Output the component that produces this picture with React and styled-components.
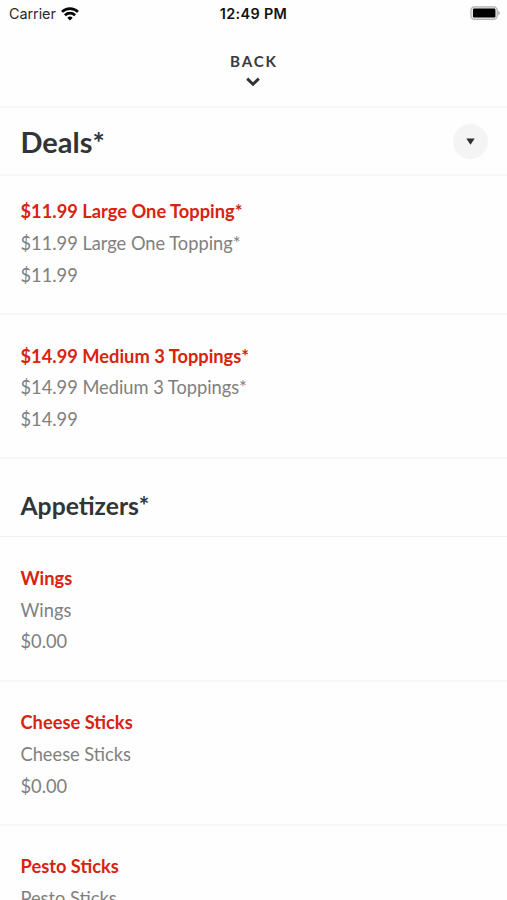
import styled, { createGlobalStyle } from "styled-components";

const GlobalStyle = createGlobalStyle`
    * {
        box-sizing: border-box;
        margin: 0;
        padding: 0;
    }

    body {
        background-color: #fefefe;
        font-family: Lato, "Liberation Sans", sans-serif;
        overflow: hidden;
    }
`

const Screen = styled.main`
    height: 900px;
    overflow: hidden;
    background-color: #fefefe;
`

const StatusBar = styled.header`
    display: grid;
    grid-template-columns: 1fr auto 1fr;
    align-items: center;
    height: 27px;
    padding: 0 9px;
    color: #111;
    font-family: Inter, Roboto, sans-serif;
    font-size: 14.4px;
`

const Carrier = styled.div`
    display: flex;
    align-items: center;
    gap: 5px;
    color: #2b2b2b;
    letter-spacing: -0.05px;
`

const Time = styled.time`
    font-size: 14.4px;
    font-weight: 600;
    letter-spacing: 0.35px;
`

const BatterySlot = styled.div`
    display: flex;
    justify-content: flex-end;
    margin-right: -3px;
    padding-bottom: 1px;
`

const BackButton = styled.button`
    display: flex;
    flex-direction: column;
    align-items: center;
    gap: 6px;
    width: 100%;
    height: 80.5px;
    padding: 24px 1px 0 0;
    border: none;
    border-bottom: 2px solid #f6f6f6;
    background: none;
    color: #3a3a3a;
    font-family: inherit;
    font-size: 15.2px;
    font-weight: 700;
    line-height: 20px;
    letter-spacing: 1.8px;
`

const BackLabel = styled.span`
    margin-right: -1.8px;
`

const SectionHeader = styled.div`
    display: flex;
    justify-content: space-between;
    align-items: center;
    height: ${(props) => (props.$large ? 68.5 : 78)}px;
    padding: ${(props) => (props.$large ? "2px 19px 0 20.5px" : "16.6px 19px 0 20.5px")};
    border-bottom: ${(props) => (props.$large ? "2px solid #f7f7f7" : "1px solid #f0f0f0")};
`

const SectionTitle = styled.h2`
    color: #333436;
    font-size: ${(props) => (props.$large ? 29 : 24.7)}px;
    font-weight: 700;
    line-height: 36px;
`

const Toggle = styled.button`
    display: flex;
    justify-content: center;
    align-items: center;
    width: 35px;
    height: 35px;
    border: none;
    border-radius: 50%;
    background-color: #f4f4f4;
`

const Item = styled.article`
    height: ${(props) => (props.$first ? 139 : 144.3)}px;
    padding: ${(props) => (props.$first ? 20.4 : 25.6)}px 20.5px 0;
    border-bottom: 2px solid #f7f7f7;
    color: #808080;
    font-size: 18.25px;
    line-height: 31.7px;
`

const ItemName = styled.h3`
    color: #d8230f;
    font-size: 18.3px;
    font-weight: 700;
`

const sections = [
    {
        title: "Deals*",
        large: true,
        items: [
            { name: "$11.99 Large One Topping*", price: "$11.99" },
            { name: "$14.99 Medium 3 Toppings*", price: "$14.99" },
        ],
    },
    {
        title: "Appetizers*",
        items: [
            { name: "Wings", price: "$0.00" },
            { name: "Cheese Sticks", price: "$0.00" },
            { name: "Pesto Sticks", price: "$0.00" },
        ],
    },
]

const WifiIcon = () => (
    <svg width="18" height="14" viewBox="0 0 18 14" fill="none" stroke="#050505" strokeWidth="2.6">
        <path d="M1 4.9a11.5 11.5 0 0 1 16 0" />
        <path d="M3.9 8.2a7.3 7.3 0 0 1 10.2 0" />
        <path d="M9 13.4 6.3 10.7a3.9 3.9 0 0 1 5.4 0z" fill="#050505" stroke="none" />
    </svg>
)

const BatteryIcon = () => (
    <svg width="31" height="14" viewBox="0 0 31 14">
        <rect x="0.9" y="0.8" width="26.4" height="12.6" rx="3.6" fill="#e4e4e4" stroke="#b4b4b4" strokeWidth="1.2" />
        <rect x="3" y="2.6" width="22.4" height="9" rx="1.4" fill="#000" />
        <path d="M28.4 4.8q2.8 2.3 0 4.6z" fill="#999" />
    </svg>
)

const ChevronIcon = () => (
    <svg width="14" height="10" viewBox="0 0 14 10" fill="none" stroke="#333" strokeWidth="2.9">
        <path d="M1.2 1.6 7 7.2 12.8 1.6" />
    </svg>
)

const CaretIcon = () => (
    <svg width="9" height="7" viewBox="0 0 9 7">
        <path d="M0.3 0.5h8.4L4.5 6.8z" fill="#303030" />
    </svg>
)

const MenuSection = ({ section }) => (
    <section>
        <SectionHeader $large={section.large}>
            <SectionTitle $large={section.large}>{section.title}</SectionTitle>
            {section.large && (
                <Toggle aria-label="Choose section">
                    <CaretIcon />
                </Toggle>
            )}
        </SectionHeader>
        {section.items.map((item, index) => (
            <Item key={item.name} $first={section.large && index === 0}>
                <ItemName>{item.name}</ItemName>
                <p>{item.name}</p>
                <p>{item.price}</p>
            </Item>
        ))}
    </section>
)

export default function App() {
    return (
        <Screen>
            <GlobalStyle />
            <StatusBar>
                <Carrier>
                    Carrier
                    <WifiIcon />
                </Carrier>
                <Time>12:49 PM</Time>
                <BatterySlot>
                    <BatteryIcon />
                </BatterySlot>
            </StatusBar>
            <BackButton>
                <BackLabel>BACK</BackLabel>
                <ChevronIcon />
            </BackButton>
            {sections.map((section) => (
                <MenuSection key={section.title} section={section} />
            ))}
        </Screen>
    );
}
